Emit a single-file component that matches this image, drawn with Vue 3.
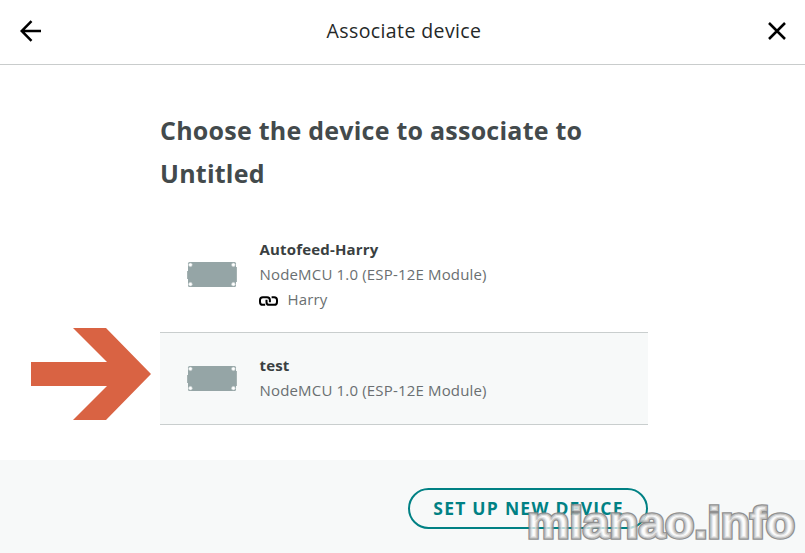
<script setup>
const devices = [
  { name: 'Autofeed-Harry', board: 'NodeMCU 1.0 (ESP-12E Module)', thing: 'Harry', active: false },
  { name: 'test', board: 'NodeMCU 1.0 (ESP-12E Module)', thing: '', active: true },
]
</script>

<template>
  <div class="dialog">
    <header class="top">
      <button class="icon-btn" aria-label="Back">
        <svg width="22" height="22" viewBox="0 0 22 22"><path d="M11.5 1.2 1.7 11l9.8 9.8M1.7 11H21" /></svg>
      </button>
      <span class="title">Associate device</span>
      <button class="icon-btn" aria-label="Close">
        <svg width="18" height="18" viewBox="0 0 18 18"><path d="M1 1l16 16M17 1 1 17" /></svg>
      </button>
    </header>

    <main class="body">
      <h1>Choose the device to associate to Untitled</h1>
      <ul class="list">
        <li v-for="d in devices" :key="d.name" class="row" :class="{ active: d.active }">
          <svg class="board" width="50" height="25" viewBox="0 0 50 25">
            <path d="M0 9h2v8H0zM48 5h2v15h-2z" fill="#a5b2b2" />
            <rect x="1" width="48" height="25" rx="1.5" fill="#95a5a6" />
            <g fill="#fff" stroke="#b9c4c4" stroke-width=".6">
              <circle cx="3.4" cy="2.8" r="1.9" /><circle cx="46.4" cy="2.8" r="1.9" />
              <circle cx="3.4" cy="22.2" r="1.9" /><circle cx="46.4" cy="22.2" r="1.9" />
            </g>
          </svg>
          <div class="info">
            <strong>{{ d.name }}</strong>
            <span>{{ d.board }}</span>
            <span v-if="d.thing" class="thing">
              <svg width="19" height="10" viewBox="0 0 19 10">
                <path d="M6.2 8.8H3.9Q1 8.8 1 5.9V4.1Q1 1.2 3.9 1.2H8Q10.9 1.2 10.9 4.1V6.3M12.6 1.2H15.1Q18 1.2 18 4.1V5.9Q18 8.8 15.1 8.8H10.2Q7.5 8.8 7.5 5.9V3.8" />
              </svg>
              {{ d.thing }}
            </span>
          </div>
        </li>
      </ul>
    </main>

    <footer class="bottom">
      <button class="setup">SET UP NEW DEVICE</button>
    </footer>

    <svg class="pointer" width="120" height="92" viewBox="0 0 120 92">
      <path d="M0 34h76L42 0h33l45 46-45 46H42l34-34H0z" fill="#d96343" />
    </svg>
    <svg class="watermark" width="285" height="53" viewBox="0 0 285 53">
      <g font-family="Liberation Sans, Arial, sans-serif" font-weight="bold" font-size="44">
        <text x="7" y="38" textLength="268" lengthAdjust="spacingAndGlyphs" class="wm-edge">mianao.info</text>
        <text x="7" y="38" textLength="268" lengthAdjust="spacingAndGlyphs" class="wm-fill">mianao.info</text>
      </g>
    </svg>
  </div>
</template>

<style>
body { margin: 0; }
</style>

<style scoped>
* { box-sizing: border-box; }
.dialog {
  position: relative;
  width: 805px;
  height: 553px;
  overflow: hidden;
  display: flex;
  flex-direction: column;
  background: #fff;
  font-family: "Open Sans", sans-serif;
}
.top {
  height: 65px;
  flex: none;
  display: flex;
  justify-content: space-between;
  align-items: center;
  padding: 0 19px 3px 20px;
  border-bottom: 1px solid #c9cccc;
}
.icon-btn {
  display: flex;
  padding: 0;
  border: 0;
  background: none;
}
.icon-btn path {
  fill: none;
  stroke: #000;
  stroke-width: 2.5;
}
.title {
  margin-right: 2px;
  font-size: 19.5px;
  line-height: 30px;
  letter-spacing: .4px;
  color: #252828;
}
.body {
  width: 488px;
  margin-left: 160px;
  flex: 1;
  padding-top: 44px;
}
h1 {
  margin: 0 0 22px;
  font-size: 25px;
  font-weight: 700;
  line-height: 43px;
  letter-spacing: .24px;
  color: #434a4c;
}
.list { list-style: none; margin: 0; padding: 0; }
.row {
  display: flex;
  align-items: center;
  height: 115px;
  padding-left: 27px;
  gap: 22.5px;
}
.row.active {
  height: 93px;
  background: #f7f9f9;
  border-top: 1px solid #c9cece;
  border-bottom: 1px solid #c9cece;
}
.row.active .info { padding-bottom: 1px; }
.info {
  display: flex;
  flex-direction: column;
  font-size: 15px;
  line-height: 25px;
  letter-spacing: .17px;
  color: #6a6f71;
}
.info strong { color: #3a3f41; }
.thing { display: flex; align-items: center; gap: 9.5px; margin-left: -.5px; }
.thing svg { position: relative; top: 1px; }
.thing path { fill: none; stroke: #000; stroke-width: 2; }
.bottom {
  height: 93px;
  flex: none;
  padding: 28px 157px 0 0;
  display: flex;
  justify-content: flex-end;
  background: #f7f9f9;
}
.setup {
  width: 240px;
  height: 41px;
  padding: 0 0 1px 1px;
  border: 2px solid #008184;
  border-radius: 21px;
  background: none;
  color: #008184;
  font: 700 17.5px/36px "Open Sans", sans-serif;
  letter-spacing: 1.25px;
}
.pointer { position: absolute; left: 31px; top: 328px; }
.watermark { position: absolute; left: 520px; top: 500px; opacity: .9; }
.wm-edge { fill: none; stroke: #858585; stroke-width: 3.6; }
.wm-fill { fill: #fff; fill-opacity: .8; stroke: #bdbdbd; stroke-width: 1.2; }
</style>
